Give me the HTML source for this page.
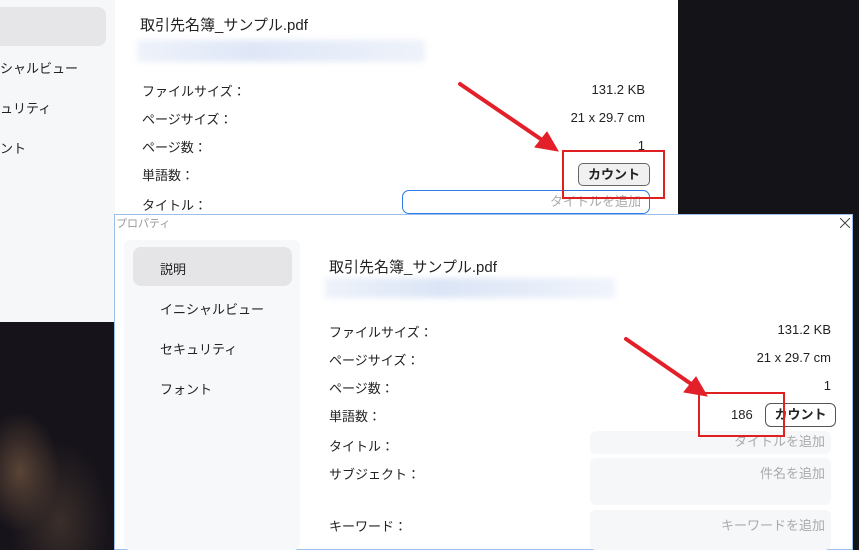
<!DOCTYPE html>
<html><head><meta charset="utf-8"><style>
*{margin:0;padding:0;box-sizing:border-box}
body{width:859px;height:550px;overflow:hidden;position:relative;background:#141318;font-family:"Liberation Sans","Noto Sans CJK JP",sans-serif;color:#222;font-size:13px}
.a{position:absolute;white-space:nowrap}
.r{text-align:right}
</style></head><body>
<div class="a" style="left:0;top:322px;width:120px;height:228px;background:radial-gradient(ellipse 40px 60px at 20px 150px,#5a4436,transparent),radial-gradient(ellipse 50px 80px at 60px 200px,#3a2e2a,transparent),#16131a"></div>
<!-- back window -->
<div class="a" style="left:0;top:0;width:115px;height:322px;background:#f6f7f9"></div>
<div class="a" style="left:115px;top:0;width:563px;height:322px;background:#fff"></div>
<div class="a" style="left:0;top:7px;width:106px;height:39px;background:#e6e6e8;border-radius:0 8px 8px 0"></div>
<div class="a" style="left:0;top:58px">シャルビュー</div>
<div class="a" style="left:0;top:98px">ュリティ</div>
<div class="a" style="left:0;top:138px">ント</div>
<div class="a" style="left:140px;top:14px;font-size:15px">取引先名簿_サンプル.pdf</div>
<div class="a" style="left:137px;top:40px;width:288px;height:22px;background:linear-gradient(90deg,#eef2fa,#dfe7f7 40%,#eef2fa);filter:blur(3px)"></div>
<div class="a" style="left:142px;top:81px">ファイルサイズ：</div>
<div class="a" style="left:142px;top:109px">ページサイズ：</div>
<div class="a" style="left:142px;top:137px">ページ数：</div>
<div class="a" style="left:142px;top:165px">単語数：</div>
<div class="a" style="left:142px;top:195px">タイトル：</div>
<div class="a r" style="left:500px;width:145px;top:82px">131.2 KB</div>
<div class="a r" style="left:500px;width:145px;top:110px">21 x 29.7 cm</div>
<div class="a r" style="left:500px;width:145px;top:138px">1</div>
<div class="a" style="left:578px;top:163px;width:72px;height:23px;border:1px solid #666;border-radius:5px;background:#f0f0f0;font-weight:bold;text-align:center;line-height:21px">カウント</div>
<div class="a" style="left:402px;top:190px;width:248px;height:24px;border:1px solid #2a7ae8;border-radius:7px;color:#aaa;text-align:right;padding-right:8px;line-height:22px">タイトルを追加</div>
<div class="a" style="left:562px;top:150px;width:103px;height:49px;border:2px solid #e02020"></div>
<!-- front dialog -->
<div class="a" style="left:114px;top:214px;width:739px;height:336px;background:#fff;border:1px solid #9cc0ec"></div>
<div class="a" style="left:116px;top:215px;font-size:11px;color:#999">プロパティ</div>
<svg class="a" style="left:840px;top:218px" width="10" height="10"><path d="M0 0L10 10M10 0L0 10" stroke="#444" stroke-width="1"/></svg>
<div class="a" style="left:124px;top:240px;width:176px;height:310px;background:#f7f8fa;border-radius:6px"></div>
<div class="a" style="left:133px;top:247px;width:159px;height:39px;background:#e5e5e7;border-radius:8px"></div>
<div class="a" style="left:160px;top:259px">説明</div>
<div class="a" style="left:160px;top:299px">イニシャルビュー</div>
<div class="a" style="left:160px;top:339px">セキュリティ</div>
<div class="a" style="left:160px;top:379px">フォント</div>
<div class="a" style="left:329px;top:256px;font-size:15px">取引先名簿_サンプル.pdf</div>
<div class="a" style="left:325px;top:278px;width:290px;height:20px;background:linear-gradient(90deg,#eef2fa,#dbe5f6 40%,#f0f4fb);filter:blur(3px)"></div>
<div class="a" style="left:329px;top:322px">ファイルサイズ：</div>
<div class="a" style="left:329px;top:350px">ページサイズ：</div>
<div class="a" style="left:329px;top:378px">ページ数：</div>
<div class="a" style="left:329px;top:406px">単語数：</div>
<div class="a" style="left:329px;top:436px">タイトル：</div>
<div class="a" style="left:329px;top:464px">サブジェクト：</div>
<div class="a" style="left:329px;top:516px">キーワード：</div>
<div class="a r" style="left:680px;width:151px;top:322px">131.2 KB</div>
<div class="a r" style="left:680px;width:151px;top:350px">21 x 29.7 cm</div>
<div class="a r" style="left:680px;width:151px;top:378px">1</div>
<div class="a" style="left:731px;top:407px">186</div>
<div class="a" style="left:765px;top:403px;width:71px;height:24px;border:1px solid #555;border-radius:6px;background:#fff;font-weight:bold;text-align:center;line-height:22px">カウント</div>
<div class="a" style="left:590px;top:431px;width:241px;height:23px;background:#f6f7f9;border-radius:6px;color:#aaa;text-align:right;padding-right:6px;line-height:22px">タイトルを追加</div>
<div class="a" style="left:590px;top:458px;width:241px;height:47px;background:#f6f7f9;border-radius:6px;color:#aaa;text-align:right;padding-right:6px;padding-top:5px">件名を追加</div>
<div class="a" style="left:590px;top:510px;width:241px;height:40px;background:#f6f7f9;border-radius:6px;color:#aaa;text-align:right;padding-right:6px;padding-top:5px">キーワードを追加</div>
<div class="a" style="left:698px;top:392px;width:87px;height:45px;border:2px solid #e02020"></div>
<svg class="a" style="left:0;top:0" width="859" height="550">
<g stroke="#e3202a" stroke-width="4" stroke-linecap="round" fill="#e3202a">
<line x1="460" y1="84" x2="548" y2="144"/>
<polygon points="558,151 535,147 547,132" stroke-width="1"/>
<line x1="626" y1="339" x2="697" y2="388"/>
<polygon points="707,396 684,392 696,377" stroke-width="1"/>
</g></svg>
</body></html>
